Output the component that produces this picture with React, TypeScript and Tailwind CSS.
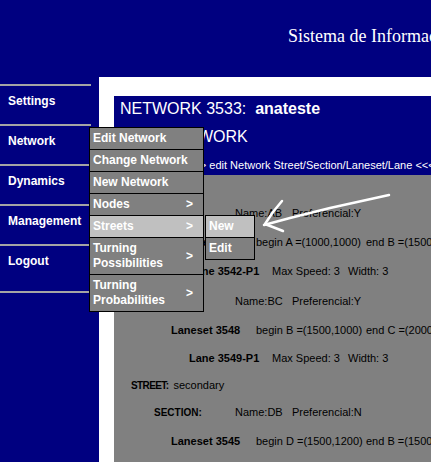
import React from "react"

const sideItems: { label: string; h: string }[] = [
  { label: "Settings", h: "h-[38px]" },
  { label: "Network", h: "h-[38px]" },
  { label: "Dynamics", h: "h-[38px]" },
  { label: "Management", h: "h-[38px]" },
  { label: "Logout", h: "h-[45px]" },
]

const menuItems: { label: string[]; sub?: boolean; active?: boolean }[] = [
  { label: ["Edit Network"] },
  { label: ["Change Network"] },
  { label: ["New Network"] },
  { label: ["Nodes"], sub: true },
  { label: ["Streets"], sub: true, active: true },
  { label: ["Turning", "Possibilities"], sub: true },
  { label: ["Turning", "Probabilities"], sub: true },
]

function Street({ h, name }: { h: string; name: string }) {
  return (
    <div className={"flex items-center pl-[17px] " + h}>
      <b className="mr-[5px] shrink-0 text-[10px] tracking-[-0.6px]">STREET:</b>
      <span>{name}</span>
    </div>
  )
}

function Section({ h, name, pref }: { h: string; name: string; pref: string }) {
  return (
    <div className={"flex items-center pl-[40px] " + h}>
      <b className="w-[81px] shrink-0 text-[10px]">SECTION:</b>
      <span className="w-[57px] shrink-0">Name:{name}</span>
      <span>Preferencial:{pref}</span>
    </div>
  )
}

function Laneset({ h, id, begin, end }: { h: string; id: string; begin: string; end: string }) {
  return (
    <div className={"flex items-center pl-[57px] " + h}>
      <b className="w-[85px] shrink-0">Laneset {id}</b>
      <span className="w-[110px] shrink-0">begin {begin}</span>
      <span>end {end}</span>
    </div>
  )
}

function Lane({ h, id }: { h: string; id: string }) {
  return (
    <div className={"flex items-center pl-[75px] " + h}>
      <b className="w-[83px] shrink-0">Lane {id}</b>
      <span className="w-[76px] shrink-0">Max Speed: 3</span>
      <span>Width: 3</span>
    </div>
  )
}

export default function App() {
  return (
    <div className="relative flex h-[462px] w-[431px] flex-col overflow-hidden bg-[#000080] font-['Liberation_Sans',Arial,sans-serif] text-white">
      {/* Header */}
      <div className="h-[77px] shrink-0 whitespace-nowrap pl-[288px] pt-[25px] font-['Liberation_Serif',serif] text-[18px] leading-[22px]">
        Sistema de Informação de Tráfego
      </div>

      <div className="flex min-h-0 flex-1">
        {/* Sidebar */}
        <div className="w-[99px] shrink-0 pt-[7px]">
          {sideItems.map((item) => (
            <div key={item.label}>
              <div className="h-[2px] w-[91px] bg-[#a4a4a4]" />
              <div className={"pl-[8px] pt-[8px] text-[12px] font-bold leading-[14px] " + item.h}>{item.label}</div>
            </div>
          ))}
          <div className="h-[2px] w-[91px] bg-[#a4a4a4]" />
        </div>

        {/* Main */}
        <div className="flex min-w-0 flex-1 flex-col bg-white pl-[15px] pt-[19px]">
          <div className="h-[79px] shrink-0 whitespace-nowrap bg-[#000080] pl-[6px] pt-[4px]">
            <div className="text-[16px] leading-[18px]">
              NETWORK 3533:&nbsp;&nbsp;<b>anateste</b>
            </div>
            <div className="mt-[10px] pl-[46px] text-[16px] leading-[18px]">NETWORK</div>
            <div className="mt-[13px] pl-[67px] text-[11px] leading-[13px]">
              &gt;&gt;&gt; edit Network Street/Section/Laneset/Lane &lt;&lt;&lt;
            </div>
          </div>

          <div className="flex-1 whitespace-nowrap bg-[#808080] text-[11px] leading-[13px] text-black">
            <Street h="h-[24px]" name="main" />
            <Section h="h-[29px]" name="AB" pref="Y" />
            <Laneset h="h-[29px]" id="3541" begin="A =(1000,1000)" end="B =(1500,1000)" />
            <Lane h="h-[29px]" id="3542-P1" />
            <Section h="h-[30px]" name="BC" pref="Y" />
            <Laneset h="h-[29px]" id="3548" begin="B =(1500,1000)" end="C =(2000,1000)" />
            <Lane h="h-[27px]" id="3549-P1" />
            <Street h="h-[27px]" name="secondary" />
            <Section h="h-[27px]" name="DB" pref="N" />
            <Laneset h="h-[30px]" id="3545" begin="D =(1500,1200)" end="B =(1500,1000)" />
            <Lane h="h-[29px]" id="3546-P1" />
          </div>
        </div>
      </div>

      {/* Dropdown menu */}
      <div className="absolute left-[89px] top-[127px] w-[115px] border border-b-0 border-black text-[12px] font-bold leading-[15px]">
        {menuItems.map((m) => (
          <div
            key={m.label.join(" ")}
            className={
              "flex items-center justify-between border-b border-black pb-[3px] pl-[3px] pr-[10px] pt-[3px] " +
              (m.active ? "bg-[#c0c0c0]" : "bg-[#808080]")
            }
          >
            <div>
              {m.label.map((l) => (
                <div key={l}>{l}</div>
              ))}
            </div>
            {m.sub && <span>&gt;</span>}
          </div>
        ))}
      </div>

      {/* Submenu */}
      <div className="absolute left-[205px] top-[215px] w-[50px] border border-b-0 border-black text-[12px] font-bold leading-[15px]">
        <div className="border-b border-black bg-[#c0c0c0] py-[3px] pl-[3px]">New</div>
        <div className="border-b border-black bg-[#808080] py-[3px] pl-[3px]">Edit</div>
      </div>

      {/* Hand-drawn arrow */}
      <svg className="absolute left-0 top-0" width="431" height="462" fill="none" stroke="white" strokeWidth="2.5" strokeLinecap="round" strokeLinejoin="round">
        <path d="M389 195 L330 208 L290 218 L264 225" />
        <path d="M282 201 L273 212 L265 224 L283 231" />
      </svg>
    </div>
  )
}
